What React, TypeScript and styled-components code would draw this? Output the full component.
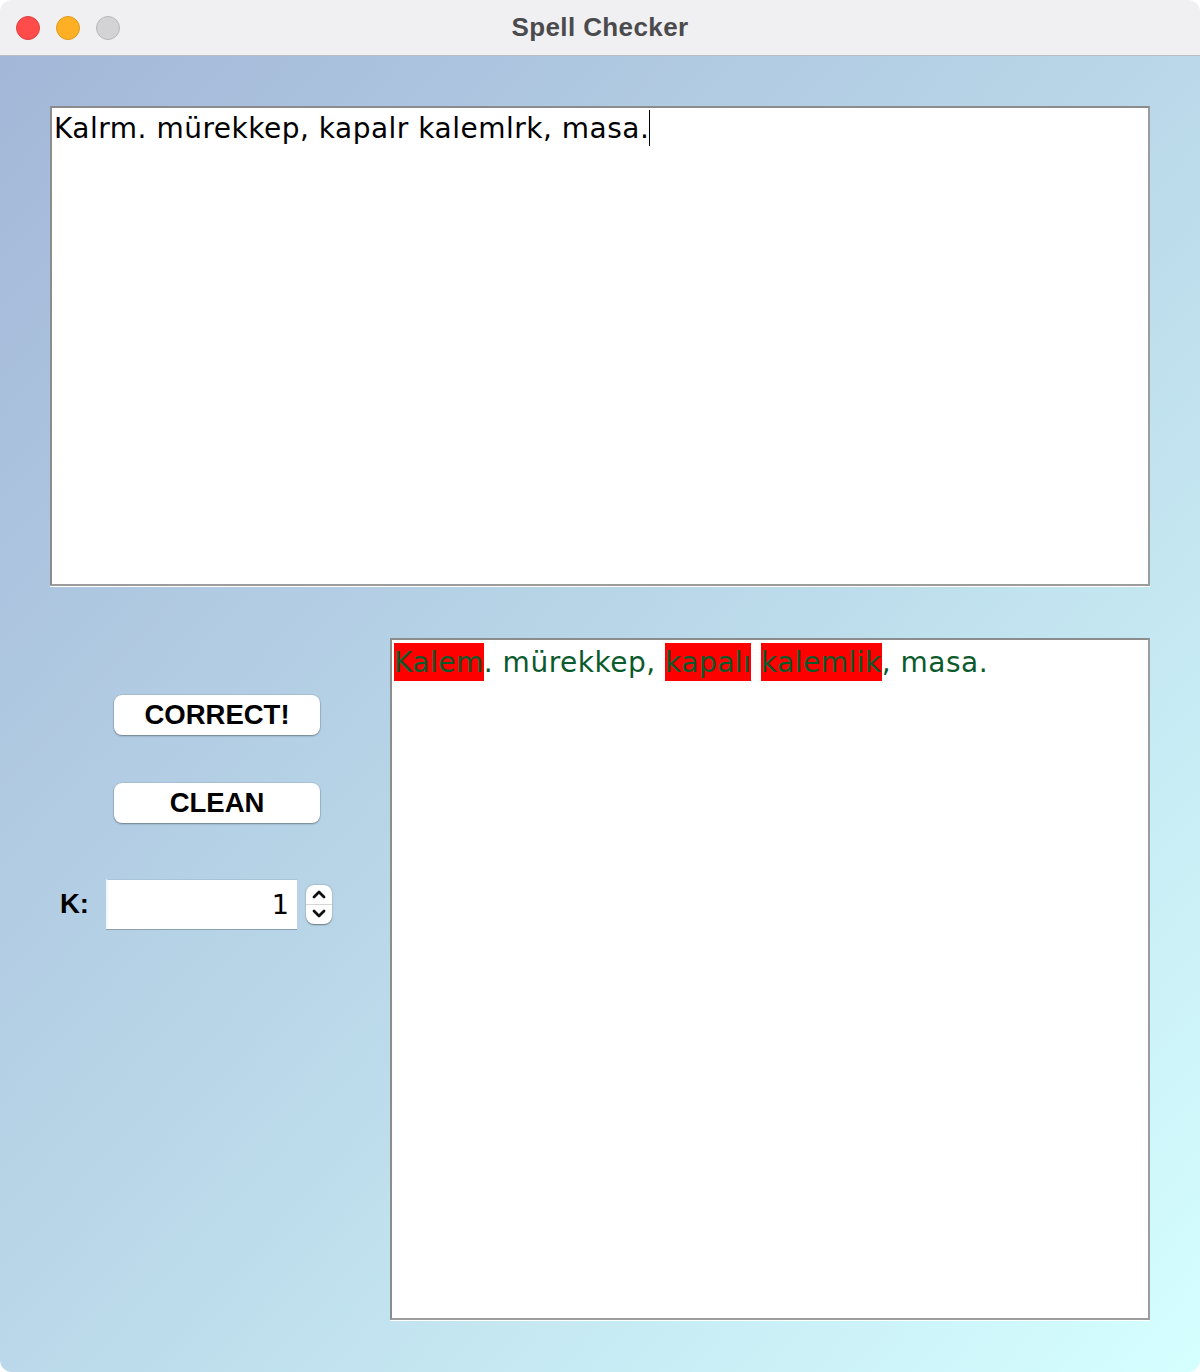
import React from "react";
import styled, { createGlobalStyle } from "styled-components";

const Global = createGlobalStyle`
  html, body { margin: 0; padding: 0; background: #ffffff; }
  #root { width: 1200px; height: 1372px; }
`;

const Window = styled.div`
  width: 1200px;
  height: 1372px;
  border-radius: 12px;
  overflow: hidden;
  display: flex;
  flex-direction: column;
  font-family: "DejaVu Sans", sans-serif;
`;

const TitleBar = styled.div`
  height: 55px;
  flex: none;
  background: #f0f0f3;
  border-bottom: 1px solid #b9bcc4;
  display: flex;
  align-items: center;
  position: relative;
`;

const Lights = styled.div`
  position: absolute;
  left: 16px;
  top: 16px;
  display: flex;
  gap: 16px;
`;

const Light = styled.span<{ $fill: string; $edge: string }>`
  width: 22px;
  height: 22px;
  border-radius: 50%;
  background: ${(p) => p.$fill};
  border: 1px solid ${(p) => p.$edge};
`;

const Title = styled.div`
  flex: 1;
  text-align: center;
  font-family: "Liberation Sans", Arial, sans-serif;
  font-weight: 700;
  font-size: 26px;
  color: #4b4b4d;
  letter-spacing: 0.4px;
`;

const Content = styled.div`
  flex: 1;
  background: linear-gradient(to bottom right, #a3b7d8 0%, #bad8e9 50%, #d5ffff 100%);
  padding: 50px 50px 52px 50px;
  display: flex;
  flex-direction: column;
  gap: 52px;
`;

const TextArea = styled.div<{ $h: number }>`
  height: ${(p) => p.$h}px;
  box-sizing: border-box;
  background: #ffffff;
  border: 2px solid #9c9c9c;
  border-top-color: #8c8c8c;
  border-left-color: #8c8c8c;
  box-shadow: 0 1px 0 #ffffff;
  padding: 2px 2px;
  font-family: "DejaVu Sans", sans-serif;
  font-size: 28px;
  letter-spacing: 0.5px;
  line-height: 38px;
`;

const InputText = styled.span`
  color: #000000;
  border-right: 1.5px solid #000;
  padding: 2px 0 1px;
`;

const Lower = styled.div`
  display: flex;
  height: 682px;
`;

const LeftCol = styled.div`
  width: 340px;
  flex: none;
  display: flex;
  flex-direction: column;
  padding-top: 57px;
`;

const Button = styled.button`
  width: 206px;
  height: 40px;
  margin-left: 64px;
  background: #ffffff;
  border: none;
  border-radius: 8px;
  box-shadow: 0 1px 2px rgba(0, 0, 0, 0.35), 0 0 0 0.5px rgba(0, 0, 0, 0.12);
  font-family: "Liberation Sans", Arial, sans-serif;
  font-weight: 700;
  font-size: 27.5px;
  color: #000;
  padding: 0;
  display: flex;
  align-items: center;
  justify-content: center;
  & + & {
    margin-top: 48px;
  }
`;

const KRow = styled.div`
  margin-top: 56px;
  display: flex;
  align-items: center;
  height: 50px;
`;

const KLabel = styled.span`
  margin-left: 10px;
  width: 46px;
  font-family: "Liberation Sans", Arial, sans-serif;
  font-weight: 700;
  font-size: 27.5px;
  color: #000;
`;

const NumberBox = styled.div`
  width: 191px;
  height: 50px;
  box-sizing: border-box;
  background: #ffffff;
  border-left: 2px solid #f4f8fa;
  border-top: 1px solid #a9c3d6;
  box-shadow: 0 1px 0 #8aa0b0;
  display: flex;
  align-items: center;
  justify-content: flex-end;
  padding-right: 8px;
  font-family: "DejaVu Sans", sans-serif;
  font-size: 27px;
  color: #000;
`;

const Spinner = styled.div`
  margin-left: 9px;
  width: 26px;
  height: 39px;
  box-sizing: border-box;
  background: #ffffff;
  border-radius: 8px;
  box-shadow: 0 0.5px 1.5px rgba(0, 0, 0, 0.45);
  display: flex;
  flex-direction: column;
`;

const SpinHalf = styled.div<{ $top?: boolean }>`
  flex: 1;
  display: flex;
  align-items: center;
  justify-content: center;
  border-bottom: ${(p) => (p.$top ? "1px solid #d6d6d6" : "none")};
`;

const Output = styled(TextArea)`
  flex: 1;
  color: #0b5a2c;
  padding-top: 4px;
`;

const Mark = styled.span`
  background: #ff0000;
  padding: 3px 0 2px;
`;

const Chevron = ({ up }: { up?: boolean }) => (
  <svg width="16" height="10" viewBox="0 0 16 10">
    <path
      d={up ? "M3 8 L8 3 L13 8" : "M3 2 L8 7 L13 2"}
      fill="none"
      stroke="#111"
      strokeWidth="2.8"
      strokeLinecap="round"
      strokeLinejoin="round"
    />
  </svg>
);

export default function App() {
  return (
    <>
      <Global />
      <Window>
        <TitleBar>
          <Lights>
            <Light $fill="#ff4b4a" $edge="#e0403f" />
            <Light $fill="#fdb024" $edge="#de9a1b" />
            <Light $fill="#d3d3d5" $edge="#b8b8ba" />
          </Lights>
          <Title>Spell Checker</Title>
        </TitleBar>
        <Content>
          <TextArea $h={480}>
            <InputText>Kalrm. mürekkep, kapalr kalemlrk, masa.</InputText>
          </TextArea>
          <Lower>
            <LeftCol>
              <Button>CORRECT!</Button>
              <Button>CLEAN</Button>
              <KRow>
                <KLabel>K:</KLabel>
                <NumberBox>1</NumberBox>
                <Spinner>
                  <SpinHalf $top>
                    <Chevron up />
                  </SpinHalf>
                  <SpinHalf>
                    <Chevron />
                  </SpinHalf>
                </Spinner>
              </KRow>
            </LeftCol>
            <Output $h={682}>
              <Mark>Kalem</Mark>. mürekkep, <Mark>kapalı</Mark> <Mark>kalemlik</Mark>, masa.
            </Output>
          </Lower>
        </Content>
      </Window>
    </>
  );
}
